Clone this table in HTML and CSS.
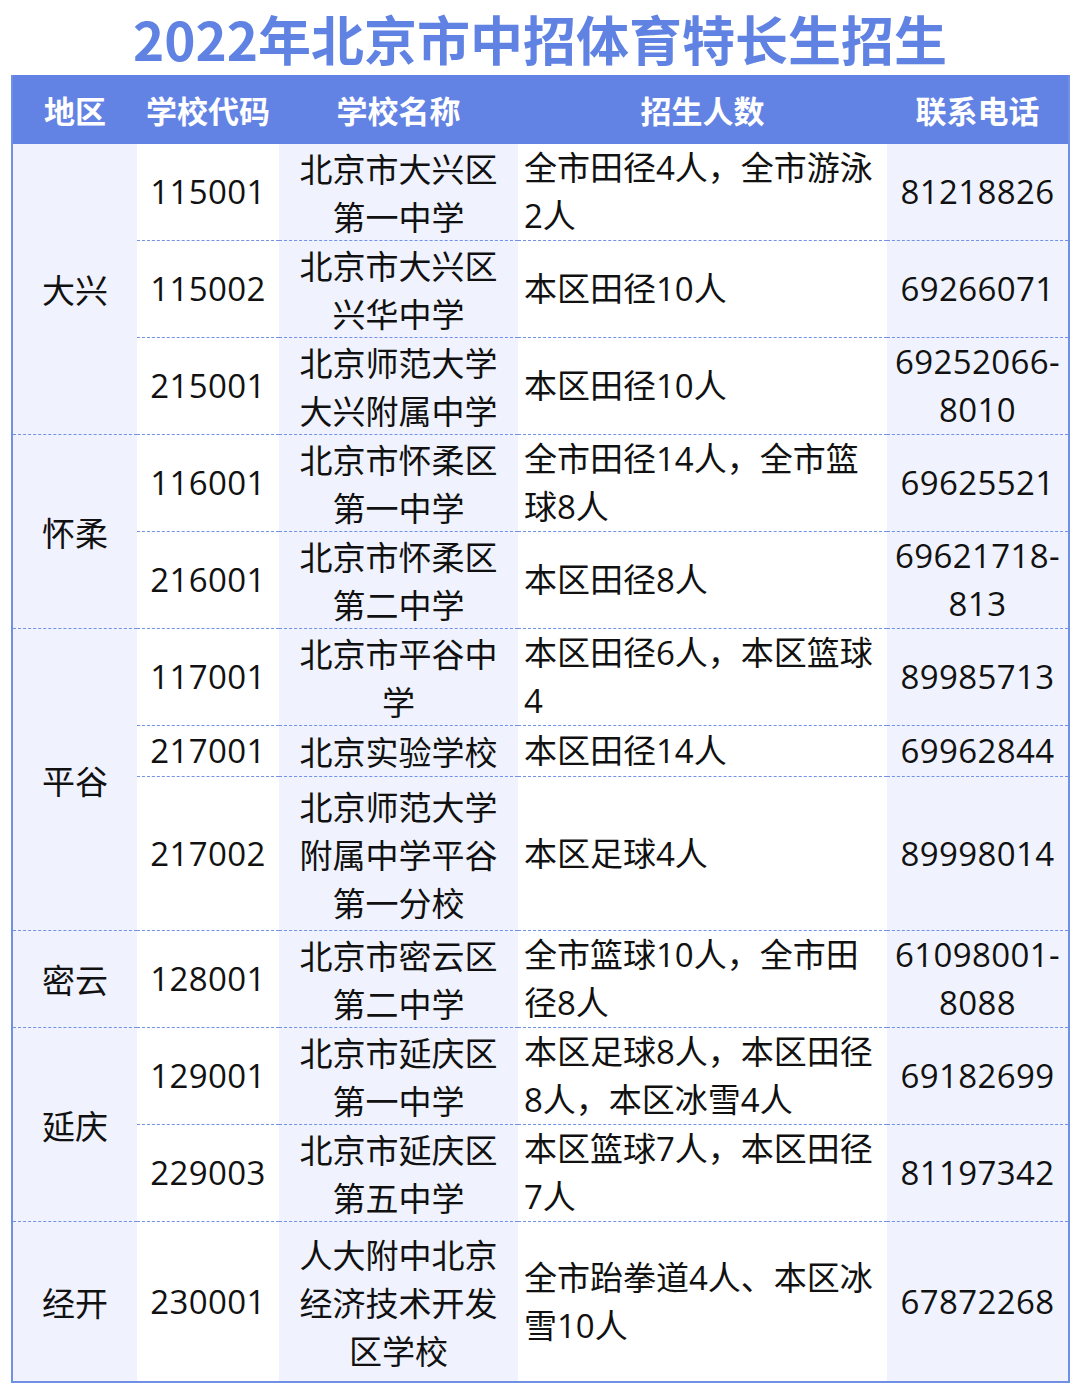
FILE: index.html
```html
<!DOCTYPE html>
<html lang="zh-CN">
<head>
<meta charset="utf-8">
<title>2022年北京市中招体育特长生招生</title>
<link rel="stylesheet" href="styles.css">
</head>
<body>
<h1 class="title">2022年北京市中招体育特长生招生</h1>
<table class="sheet">
  <colgroup>
    <col class="w-region">
    <col class="w-code">
    <col class="w-name">
    <col class="w-count">
    <col class="w-phone">
  </colgroup>
  <thead>
    <tr>
      <th>地区</th>
      <th>学校代码</th>
      <th>学校名称</th>
      <th>招生人数</th>
      <th>联系电话</th>
    </tr>
  </thead>
  <tbody>
    <tr class="two">
      <td class="region" rowspan="3">大兴</td>
      <td class="code">115001</td>
      <td class="name">北京市大兴区第一中学</td>
      <td class="count">全市田径4人，全市游泳2人</td>
      <td class="phone">81218826</td>
    </tr>
    <tr class="two">
      <td class="code">115002</td>
      <td class="name">北京市大兴区兴华中学</td>
      <td class="count">本区田径10人</td>
      <td class="phone">69266071</td>
    </tr>
    <tr class="two">
      <td class="code">215001</td>
      <td class="name">北京师范大学大兴附属中学</td>
      <td class="count">本区田径10人</td>
      <td class="phone">69252066-<wbr>8010</td>
    </tr>
    <tr class="two">
      <td class="region" rowspan="2">怀柔</td>
      <td class="code">116001</td>
      <td class="name">北京市怀柔区第一中学</td>
      <td class="count">全市田径14人，全市篮球8人</td>
      <td class="phone">69625521</td>
    </tr>
    <tr class="two">
      <td class="code">216001</td>
      <td class="name">北京市怀柔区第二中学</td>
      <td class="count">本区田径8人</td>
      <td class="phone">69621718-<wbr>813</td>
    </tr>
    <tr class="two">
      <td class="region" rowspan="3">平谷</td>
      <td class="code">117001</td>
      <td class="name">北京市平谷中学</td>
      <td class="count">本区田径6人，本区篮球4</td>
      <td class="phone">89985713</td>
    </tr>
    <tr class="one">
      <td class="code">217001</td>
      <td class="name">北京实验学校</td>
      <td class="count">本区田径14人</td>
      <td class="phone">69962844</td>
    </tr>
    <tr class="three">
      <td class="code">217002</td>
      <td class="name">北京师范大学附属中学平谷第一分校</td>
      <td class="count">本区足球4人</td>
      <td class="phone">89998014</td>
    </tr>
    <tr class="two">
      <td class="region">密云</td>
      <td class="code">128001</td>
      <td class="name">北京市密云区第二中学</td>
      <td class="count">全市篮球10人，全市田径8人</td>
      <td class="phone">61098001-<wbr>8088</td>
    </tr>
    <tr class="two">
      <td class="region" rowspan="2">延庆</td>
      <td class="code">129001</td>
      <td class="name">北京市延庆区第一中学</td>
      <td class="count">本区足球8人，本区田径8人，本区冰雪4人</td>
      <td class="phone">69182699</td>
    </tr>
    <tr class="two">
      <td class="code">229003</td>
      <td class="name">北京市延庆区第五中学</td>
      <td class="count">本区篮球7人，本区田径7人</td>
      <td class="phone">81197342</td>
    </tr>
    <tr class="last">
      <td class="region">经开</td>
      <td class="code">230001</td>
      <td class="name">人大附中北京经济技术开发区学校</td>
      <td class="count">全市跆拳道4人、本区冰雪10人</td>
      <td class="phone">67872268</td>
    </tr>
  </tbody>
</table>
</body>
</html>
```

FILE: styles.css
```css
html, body {
  margin: 0;
  padding: 0;
  background: #ffffff;
}

body {
  font-family: "Open Sans", "Noto Sans CJK SC", sans-serif;
  color: #111111;
}

.title {
  margin: 0;
  height: 75px;
  line-height: 77px;
  text-align: center;
  font-family: "Noto Sans CJK SC", sans-serif;
  font-weight: 700;
  font-size: 53px;
  color: #6082e2;
}

.sheet {
  margin-left: 11px;
  width: 1057px;
  table-layout: fixed;
  border-collapse: collapse;
  border: 2px solid #7090e6;
  border-top: none;
}

.w-region { width: 125px; }
.w-code { width: 142px; }
.w-name { width: 239px; }
.w-count { width: 369px; }
.w-phone { width: 182px; }

.sheet th {
  height: 69px;
  padding: 0;
  background: #6383e4;
  color: #ffffff;
  font-family: "Noto Sans CJK SC", sans-serif;
  font-weight: 700;
  font-size: 31px;
  text-align: center;
  vertical-align: middle;
}

.sheet td {
  padding: 0;
  font-size: 33px;
  line-height: 48px;
  vertical-align: middle;
  text-align: center;
}

.sheet tbody tr + tr td {
  border-top: 1px dashed #7391e8;
}

.sheet tr.one td { height: 50px; }
.sheet tr.two td { height: 96px; }
.sheet tr.three td { height: 153px; }
.sheet tr.last td { height: 159px; }

.region {
  background: #f0f3fd;
  font-family: "Noto Sans CJK SC", sans-serif;
}

.code {
  background: #ffffff;
  letter-spacing: 0.4px;
}

.name {
  background: #f0f3fd;
  padding: 0 10px !important;
  font-family: "Noto Sans CJK SC", sans-serif;
}

.count {
  background: #ffffff;
  text-align: left !important;
  padding: 0 8px 0 6px !important;
}

.phone {
  background: #f0f3fd;
  padding: 0 2px !important;
  letter-spacing: 0.4px;
}
```
